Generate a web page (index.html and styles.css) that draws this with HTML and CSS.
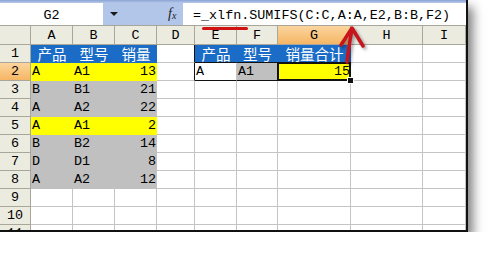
FILE: index.html
```html
<!DOCTYPE html>
<html lang="zh-CN">
<head>
<meta charset="utf-8">
<title>SUMIFS</title>
<link rel="stylesheet" href="styles.css">
</head>
<body>
<div class="win">
  <div class="topstrip"></div>
  <div class="fbar">
    <div class="namebox">G2</div>
    <div class="tools"><span class="tri"></span><span class="fx">f<sub>x</sub></span></div>
    <div class="formula">=_xlfn.SUMIFS(C:C,A:A,E2,B:B,F2)</div>
  </div>
  <table class="sheet">
    <colgroup>
      <col class="c-rh"><col class="c-a"><col class="c-b"><col class="c-c"><col class="c-d"><col class="c-e"><col class="c-f"><col class="c-g"><col class="c-h"><col class="c-i">
    </colgroup>
    <tr class="hdr"><th></th><th>A</th><th>B</th><th>C</th><th>D</th><th>E</th><th>F</th><th class="hsel">G</th><th>H</th><th>I</th></tr>
    <tr><th>1</th><td class="blue">产品</td><td class="blue">型号</td><td class="blue">销量</td><td class="pre"></td><td class="blue bb">产品</td><td class="blue bb">型号</td><td class="blue">销量合计</td><td></td><td></td></tr>
    <tr><th class="hsel">2</th><td class="yel">A</td><td class="yel">A1</td><td class="yel num">13</td><td class="pre"></td><td class="crit bb">A</td><td class="gray bb">A1</td><td class="yel num sel">15</td><td></td><td></td></tr>
    <tr><th>3</th><td class="gray">B</td><td class="gray">B1</td><td class="gray num">21</td><td></td><td></td><td></td><td></td><td></td><td></td></tr>
    <tr><th>4</th><td class="gray">A</td><td class="gray">A2</td><td class="gray num">22</td><td></td><td></td><td></td><td></td><td></td><td></td></tr>
    <tr><th>5</th><td class="yel">A</td><td class="yel">A1</td><td class="yel num">2</td><td></td><td></td><td></td><td></td><td></td><td></td></tr>
    <tr><th>6</th><td class="gray">B</td><td class="gray">B2</td><td class="gray num">14</td><td></td><td></td><td></td><td></td><td></td><td></td></tr>
    <tr><th>7</th><td class="gray">D</td><td class="gray">D1</td><td class="gray num">8</td><td></td><td></td><td></td><td></td><td></td><td></td></tr>
    <tr><th>8</th><td class="gray">A</td><td class="gray">A2</td><td class="gray num">12</td><td></td><td></td><td></td><td></td><td></td><td></td></tr>
    <tr><th>9</th><td></td><td></td><td></td><td></td><td></td><td></td><td></td><td></td><td></td></tr>
    <tr><th>10</th><td></td><td></td><td></td><td></td><td></td><td></td><td></td><td></td><td></td></tr>
    <tr><th>11</th><td></td><td></td><td></td><td></td><td></td><td></td><td></td><td></td><td></td></tr>
  </table>
  <div class="underline"></div>
  <svg class="arrow" width="44" height="50" viewBox="0 0 44 50">
    <path d="M17 42 C18 32 20 20 22 9" fill="none" stroke="#c8141c" stroke-width="3.5" stroke-linecap="round"/>
    <path d="M11 25 L22 8 L33 26" fill="none" stroke="#c8141c" stroke-width="3.5" stroke-linecap="round" stroke-linejoin="round"/>
  </svg>
</div>
</body>
</html>
```

FILE: styles.css
```css
html, body {
  margin: 0;
  padding: 0;
  background: #ffffff;
}

.win {
  position: relative;
  width: 466px;
  height: 230px;
  overflow: hidden;
  background: #ffffff;
  border-right: 2px solid #111;
  border-bottom: 2px solid #111;
  box-shadow: 5px 7px 10px rgba(0, 0, 0, 0.5);
  font-family: "Liberation Mono", "DejaVu Sans Mono", monospace;
  font-size: 13.4px;
  color: #000;
}

.topstrip {
  height: 3px;
  background: linear-gradient(#8aa4d4, #b7c9ea);
}

.fbar {
  display: flex;
  height: 22px;
  border-bottom: 1px solid #a7a59a;
  background: #fff;
}

.namebox {
  width: 103px;
  display: flex;
  align-items: center;
  justify-content: center;
  padding-top: 2px;
  box-sizing: border-box;
}

.tools {
  width: 80px;
  background: #b2c6ea;
  display: flex;
  align-items: center;
  justify-content: space-between;
  padding: 0 1px 0 7px;
  box-sizing: border-box;
}

.tri {
  width: 0;
  height: 0;
  border-left: 4px solid transparent;
  border-right: 4px solid transparent;
  border-top: 4px solid #1a1a1a;
}

.fx {
  font-family: "Liberation Serif", serif;
  font-style: italic;
  font-size: 14px;
  width: 14px;
  color: #222;
}

.fx sub {
  font-size: 10px;
  vertical-align: -1px;
}

.formula {
  flex: 1;
  display: flex;
  align-items: center;
  padding-left: 10px;
  padding-top: 2px;
  white-space: nowrap;
}

.sheet {
  table-layout: fixed;
  border-collapse: separate;
  border-spacing: 0;
  width: 466px;
}

.c-rh { width: 31px; }
.c-a { width: 42px; }
.c-b { width: 42px; }
.c-c { width: 42px; }
.c-d { width: 38px; }
.c-e { width: 42px; }
.c-f { width: 41px; }
.c-g { width: 73px; }
.c-h { width: 72px; }
.c-i { width: 43px; }

.sheet th,
.sheet td {
  height: 17px;
  padding: 0;
  box-sizing: content-box;
  border-right: 1px solid #c4c4c4;
  border-bottom: 1px solid #c4c4c4;
  line-height: 17px;
  white-space: nowrap;
  overflow: visible;
}

.sheet th {
  background: #ecebe0;
  font-weight: normal;
  text-align: center;
  border-right-color: #a9a79c;
  border-bottom-color: #a9a79c;
}

.sheet tr.hdr th {
  padding-top: 1px;
  height: 16px;
}

.sheet th.hsel {
  background: linear-gradient(#fbd59e, #f5b664);
}

.sheet td {
  padding-left: 1px;
}

.blue {
  background: #1a6cc6;
  border-color: #1a6cc6 !important;
  color: #fff;
  text-align: center;
  font-family: "Noto Sans CJK SC", sans-serif;
  font-size: 14.5px;
  line-height: 17px;
}

.yel {
  background: #ffff00;
  border-color: #ffff00 !important;
}

.gray {
  background: #c0c0c0;
  border-color: #c0c0c0 !important;
}

.num {
  text-align: right;
  padding-right: 2px;
}

.pre {
  border-right-color: #111 !important;
}

.bb {
  border-bottom-color: #111 !important;
}

.crit {
  background: #fff;
}

.sel {
  position: relative;
}

.sel::after {
  content: "";
  position: absolute;
  left: -1px;
  top: -1px;
  right: -1px;
  bottom: -1px;
  border: 2px solid #111;
}

.sel::before {
  content: "";
  position: absolute;
  right: -4px;
  bottom: -4px;
  width: 5px;
  height: 5px;
  background: #111;
  border: 1px solid #fff;
  z-index: 2;
}

.underline {
  position: absolute;
  left: 202px;
  top: 27px;
  width: 46px;
  height: 3px;
  background: #d01414;
  border-radius: 2px;
}

.arrow {
  position: absolute;
  left: 330px;
  top: 20px;
  filter: drop-shadow(2px 2px 1.5px rgba(0, 0, 0, 0.35));
}
```
